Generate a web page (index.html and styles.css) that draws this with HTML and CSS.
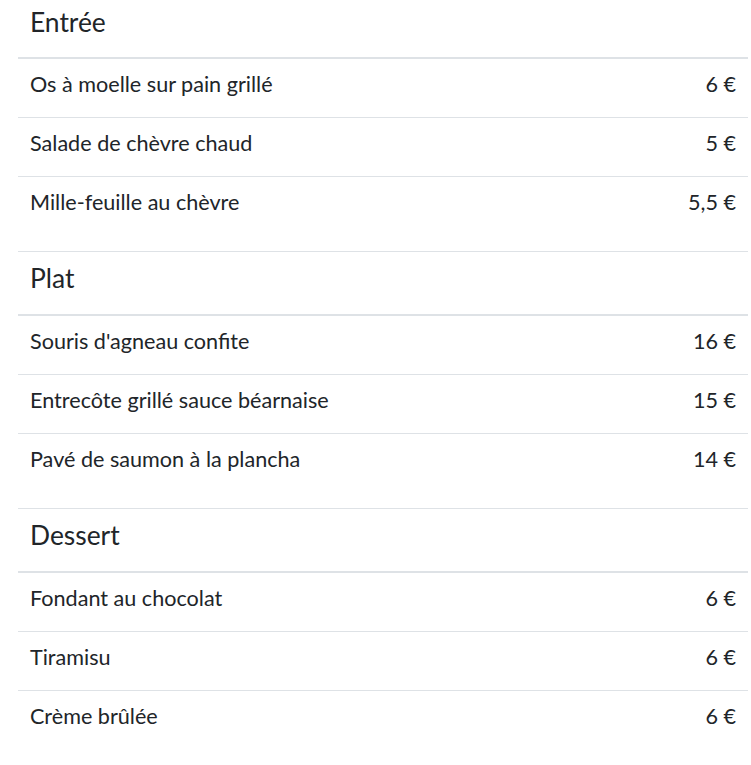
FILE: index.html
```html
<!DOCTYPE html>
<html lang="fr">
<head>
<meta charset="utf-8">
<title>Carte</title>
<link rel="stylesheet" href="styles.css">
</head>
<body>
<main class="menu">
  <table class="menu-table first">
    <thead><tr><th colspan="2">Entrée</th></tr></thead>
    <tbody>
      <tr><td>Os à moelle sur pain grillé</td><td class="price">6 €</td></tr>
      <tr><td>Salade de chèvre chaud</td><td class="price">5 €</td></tr>
      <tr><td>Mille-feuille au chèvre</td><td class="price">5,5 €</td></tr>
    </tbody>
  </table>
  <table class="menu-table">
    <thead><tr><th colspan="2">Plat</th></tr></thead>
    <tbody>
      <tr><td>Souris d'agneau confite</td><td class="price">16 €</td></tr>
      <tr><td>Entrecôte grillé sauce béarnaise</td><td class="price">15 €</td></tr>
      <tr><td>Pavé de saumon à la plancha</td><td class="price">14 €</td></tr>
    </tbody>
  </table>
  <table class="menu-table">
    <thead><tr><th colspan="2">Dessert</th></tr></thead>
    <tbody>
      <tr><td>Fondant au chocolat</td><td class="price">6 €</td></tr>
      <tr><td>Tiramisu</td><td class="price">6 €</td></tr>
      <tr><td>Crème brûlée</td><td class="price">6 €</td></tr>
    </tbody>
  </table>
</main>
</body>
</html>
```

FILE: styles.css
```css
html, body {
  margin: 0;
  padding: 0;
  background: #fff;
}
body {
  font-family: Lato, "Open Sans", sans-serif;
  color: #212529;
}
.menu {
  padding-left: 18px;
  width: 730px;
}
.menu-table {
  width: 100%;
  border-collapse: collapse;
  margin-bottom: 16px;
}
.menu-table.first {
  margin-top: -4px;
}
.menu-table th {
  text-align: left;
  font-weight: 400;
  font-size: 26.4px;
  line-height: 37px;
  padding: 8px 12px 17px;
  border-top: 1px solid #dee2e6;
  border-bottom: 2px solid #dee2e6;
}
.menu-table.first th {
  border-top: none;
  padding-bottom: 16px;
}
.menu-table td {
  font-size: 21.6px;
  line-height: 30px;
  padding: 10px 12px 18px;
  border-top: 1px solid #dee2e6;
}
.menu-table thead + tbody tr:first-child td {
  border-top: none;
}
.menu-table td.price {
  text-align: right;
  white-space: nowrap;
}
```
